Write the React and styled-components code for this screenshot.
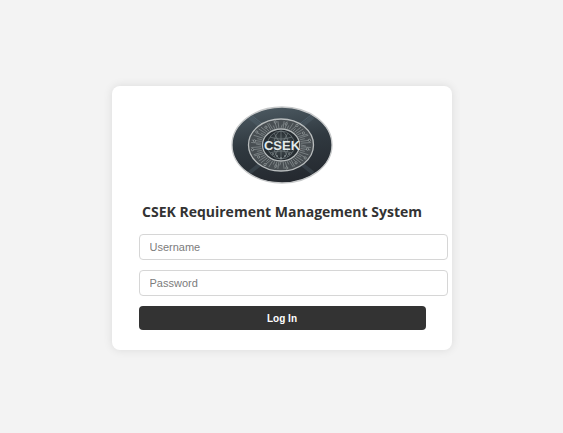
import React from "react";
import styled, { createGlobalStyle } from "styled-components";

const GlobalStyle = createGlobalStyle`
  body {
    margin: 0;
    background: #f3f3f3;
  }
`;

const Page = styled.main`
  box-sizing: border-box;
  min-height: 100vh;
  display: flex;
  align-items: center;
  justify-content: center;
  padding-top: 3px;
`;

const Card = styled.form`
  box-sizing: border-box;
  width: 100%;
  max-width: 340px;
  padding: 20px 26px 20px 27px;
  display: flex;
  flex-direction: column;
  align-items: center;
  background: #fff;
  border-radius: 8px;
  box-shadow: 0 0 10px rgba(0, 0, 0, 0.1);
`;

const Seal = styled.svg`
  display: block;
  width: 102px;
  height: 78px;
`;

const SealText = styled.text`
  font: bold 13px "Liberation Sans", Arial, sans-serif;
  fill: #e2e9e9;
  text-anchor: middle;
`;

const Title = styled.h1`
  margin: 18px 0 12px;
  font: bold 14px/20px "Open Sans", "Noto Sans", sans-serif;
  color: #333;
  white-space: nowrap;
`;

const Field = styled.input`
  box-sizing: content-box;
  width: 100%;
  height: 24px;
  margin: 0 0 10px;
  padding: 0 10px;
  align-self: flex-start;
  border: 1px solid #d6d6d6;
  border-radius: 4px;
  background: #fff;
  color: #333;
  font: 11px "Liberation Sans", Arial, sans-serif;

  &::placeholder {
    color: #7c7c7c;
    opacity: 1;
  }
`;

const SubmitButton = styled.button`
  width: 100%;
  height: 24px;
  margin: 0;
  padding: 0;
  border: 0;
  border-radius: 4px;
  background: #333;
  color: #fff;
  font: bold 10px "Liberation Sans", Arial, sans-serif;
  cursor: pointer;
`;

const CX = 50;
const CY = 39;
const at = (deg, rx, ry) => {
  const a = (deg * Math.PI) / 180;
  return [(CX + rx * Math.cos(a)).toFixed(2), (CY + ry * Math.sin(a)).toFixed(2)];
};

const traces = Array.from({ length: 60 }, (_, i) => {
  const deg = i * 6;
  const long = i % 3 !== 0;
  const [x1, y1] = at(deg, 20, 17);
  const [x2, y2] = at(deg + (i % 5 === 0 ? 3 : 0), long ? 30 : 25, long ? 24 : 20.5);
  return `M${x1} ${y1}L${x2} ${y2}`;
}).join("");

const nodes = Array.from({ length: 16 }, (_, i) => at(i * 22.5 + 11, i % 2 ? 29 : 27, i % 2 ? 23.5 : 21.5));

function CsekSeal() {
  return (
    <Seal viewBox="0 0 102 78" role="img" aria-label="CSEK seal">
      <defs>
        <linearGradient id="face" x1="0.4" y1="0" x2="0.6" y2="1">
          <stop offset="0" stopColor="#4b5860" />
          <stop offset="0.45" stopColor="#303940" />
          <stop offset="1" stopColor="#24282e" />
        </linearGradient>
        <radialGradient id="core">
          <stop offset="0" stopColor="#4c5659" />
          <stop offset="1" stopColor="#20262b" />
        </radialGradient>
        <clipPath id="rim">
          <ellipse cx="51" cy="39" rx="49" ry="37" />
        </clipPath>
      </defs>
      <ellipse cx="51" cy="39" rx="50" ry="38" fill="url(#face)" stroke="#c7c9ca" strokeWidth="1.3" />
      <g clipPath="url(#rim)" fill="none">
        <path d="M18 11l14 11M82 11L68 22M18 67l14-11M82 67L68 56" stroke="#60747f" strokeWidth="4" opacity=".25" />
        <path d="M20 9l14 11M80 9L66 20" stroke="#71879a" strokeWidth=".6" opacity=".6" />
      </g>
      <ellipse cx={CX} cy={CY} rx="32.5" ry="26" fill="#484e52" stroke="#b9bdbe" strokeWidth="1.3" />
      <path d={traces} stroke="#a5abad" strokeWidth=".8" fill="none" opacity=".65" />
      <g fill="#343b40" stroke="#b4babb" strokeWidth=".6">
        {nodes.map(([x, y]) => (
          <circle key={`${x}-${y}`} cx={x} cy={y} r="1.1" />
        ))}
      </g>
      <ellipse cx={CX} cy={CY} rx="18.5" ry="16" fill="url(#core)" stroke="#b4b9ba" strokeWidth="1.3" />
      <g fill="none" stroke="#8d979a" strokeWidth=".7" opacity=".75">
        <ellipse cx={CX} cy={CY} rx="13.5" ry="14" />
        <ellipse cx={CX} cy={CY} rx="7" ry="14" />
        <path d="M50 25v28M39 31q11 4 22 0M39 47q11-4 22 0M43 27l14 24M57 27L43 51" />
      </g>
      <g fill="#a4adaf">
        <circle cx="42" cy="48" r=".8" />
        <circle cx="46" cy="50" r=".8" />
        <circle cx="54" cy="50" r=".8" />
        <circle cx="58" cy="48" r=".8" />
        <circle cx="50" cy="52" r=".8" />
      </g>
      <path d="M33 35h35v9H33z" fill="#262e32" opacity=".65" />
      <SealText x="51" y="44">CSEK</SealText>
    </Seal>
  );
}

export default function App() {
  return (
    <>
      <GlobalStyle />
      <Page>
        <Card onSubmit={(event) => event.preventDefault()}>
          <CsekSeal />
          <Title>CSEK Requirement Management System</Title>
          <Field type="text" name="username" placeholder="Username" aria-label="Username" autoComplete="username" />
          <Field type="password" name="password" placeholder="Password" aria-label="Password" autoComplete="current-password" />
          <SubmitButton type="submit">Log In</SubmitButton>
        </Card>
      </Page>
    </>
  );
}
